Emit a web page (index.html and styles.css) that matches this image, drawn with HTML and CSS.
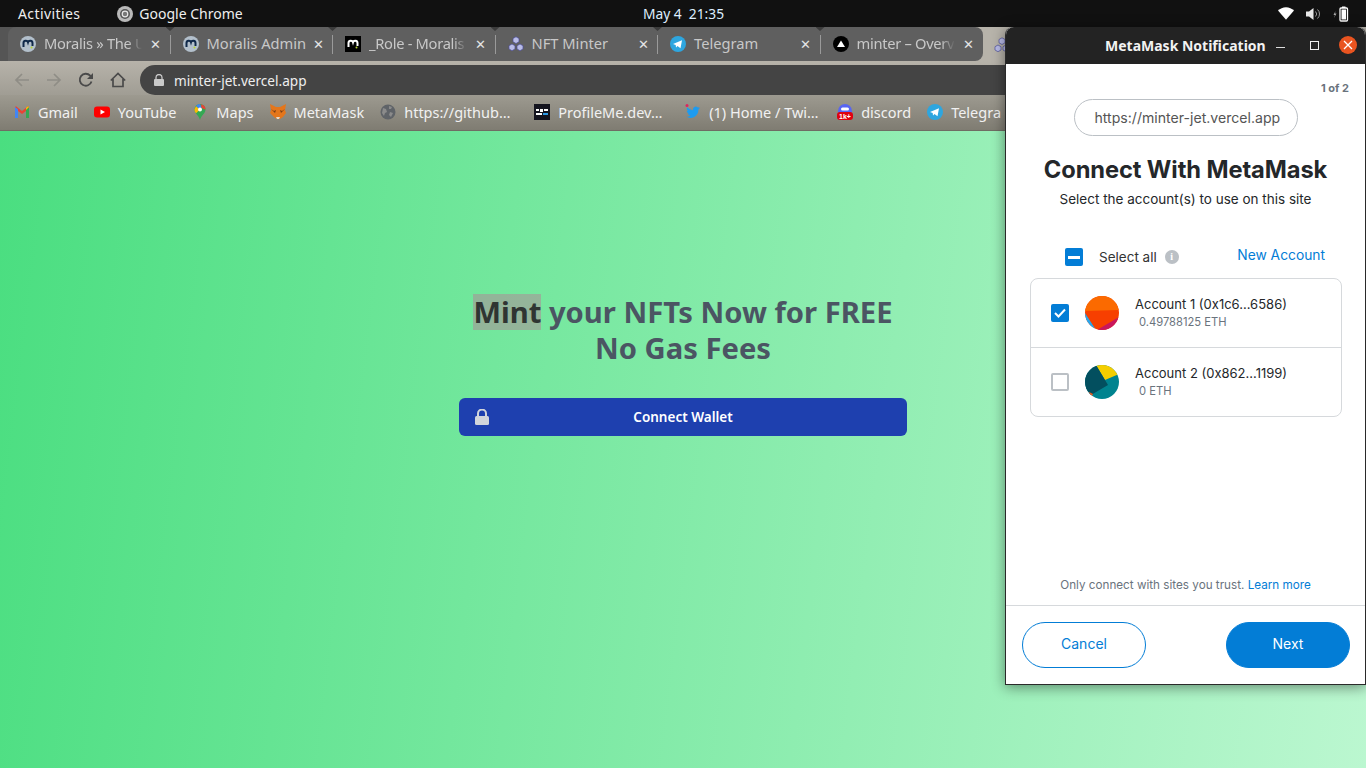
FILE: index.html
```html
<!DOCTYPE html>
<html lang="en">
<head>
<meta charset="utf-8">
<title>NFT Minter</title>
<link rel="stylesheet" href="styles.css">
</head>
<body>
<div class="desktop">
  <header class="topbar">
    <div class="topbar-left">
      <span class="activities">Activities</span>
      <span class="appname">
        <svg class="chrome-ic" viewBox="0 0 16 16"><circle cx="8" cy="8" r="8" fill="#b9b9b9"/><circle cx="8" cy="8" r="5" fill="#555"/><circle cx="8" cy="8" r="3.4" fill="#e8e8e8"/><circle cx="8" cy="8" r="2.2" fill="#777"/></svg>
        Google Chrome
      </span>
    </div>
    <div class="clock">May 4&nbsp; 21:35</div>
    <div class="tray">
      <svg class="tray-wifi" viewBox="0 0 16 13"><path d="M0 3.6C2 1.6 5 .3 8 .3s6 1.3 8 3.3L8 12.7z" fill="#fff"/></svg>
      <svg class="tray-vol" viewBox="0 0 15 14"><path d="M0 4.5h3L7.5 1v12L3 9.500H0z" fill="#e8e8e8"/><path d="M9.500 4.500a3.500 3.500 0 0 1 0 5M11.500 2.500a6 6 0 0 1 0 9" fill="none" stroke="#999" stroke-width="1"/></svg>
      <svg class="tray-bat" viewBox="0 0 16 16"><path d="M2.500 5 .5 9h1.500L1 12l2.500-4.500H2z" fill="#aaa"/><rect x="7" y="2" width="7.500" height="13" rx="1" fill="none" stroke="#fff" stroke-width="1.300"/><rect x="9" y="0.500" width="3.500" height="1.500" fill="#fff"/><rect x="8.500" y="3.500" width="4.500" height="10" fill="#fff"/></svg>
    </div>
  </header>

  <div class="browser">
    <div class="tabstrip">
      <div class="tab">
        <svg class="fav" viewBox="0 0 16 16"><circle cx="8" cy="8" r="8" fill="#b3c0cc"/><path d="M3.500 11V7a2.300 2.300 0 0 1 4.500-.7A2.300 2.300 0 0 1 12.500 7v3" fill="none" stroke="#10294a" stroke-width="2"/><circle cx="11.500" cy="11.500" r="1" fill="#b7d433"/></svg>
        <span class="tab-title tab-fade">Moralis » The U</span><span class="tab-x">✕</span>
      </div>
      <div class="tab">
        <svg class="fav" viewBox="0 0 16 16"><circle cx="8" cy="8" r="8" fill="#b3c0cc"/><path d="M3.500 11V7a2.300 2.300 0 0 1 4.500-.7A2.300 2.300 0 0 1 12.500 7v3" fill="none" stroke="#10294a" stroke-width="2"/><circle cx="11.500" cy="11.500" r="1" fill="#b7d433"/></svg>
        <span class="tab-title">Moralis Admin</span><span class="tab-x">✕</span>
      </div>
      <div class="tab">
        <svg class="fav" viewBox="0 0 16 16"><rect width="16" height="16" fill="#000"/><path d="M3.500 11V7a2.300 2.300 0 0 1 4.500-.7A2.300 2.300 0 0 1 12.500 7v3" fill="none" stroke="#fff" stroke-width="2"/><circle cx="11.500" cy="11.500" r="1" fill="#b7d433"/></svg>
        <span class="tab-title tab-fade">_Role - Moralis</span><span class="tab-x">✕</span>
      </div>
      <div class="tab">
        <svg class="fav" viewBox="0 0 16 16"><g fill="#b9bce8" stroke="#4d4f99" stroke-width=".7"><path d="M8 .8l3 1.700v3.300L8 7.500 5 5.800V2.500z"/><path d="M4 8l3 1.700V13l-3 1.700L1 13V9.700z"/><path d="M12 8l3 1.700V13l-3 1.700L9 13V9.700z"/></g></svg>
        <span class="tab-title">NFT Minter</span><span class="tab-x">✕</span>
      </div>
      <div class="tab">
        <svg class="fav" viewBox="0 0 16 16"><circle cx="8" cy="8" r="8" fill="#2ea6df"/><path d="M3 8l9-3.700-1.500 8-3-2.200-1.500 1.500-.3-2.500z" fill="#fff"/></svg>
        <span class="tab-title">Telegram</span><span class="tab-x">✕</span>
      </div>
      <div class="tab tab-last">
        <svg class="fav" viewBox="0 0 16 16"><circle cx="8" cy="8" r="8" fill="#000"/><path d="M8 4.500l4 6.500H4z" fill="#fff"/></svg>
        <span class="tab-title tab-fade">minter – Overv</span><span class="tab-x">✕</span>
      </div>
      <div class="tab-active">
        <svg class="fav" viewBox="0 0 16 16"><g fill="#b9bce8" stroke="#4d4f99" stroke-width=".7"><path d="M8 .8l3 1.700v3.300L8 7.500 5 5.800V2.500z"/><path d="M4 8l3 1.700V13l-3 1.700L1 13V9.700z"/><path d="M12 8l3 1.700V13l-3 1.700L9 13V9.700z"/></g></svg>
      </div>
    </div>

    <div class="toolbar">
      <svg class="nav-ic" viewBox="0 0 16 16"><path d="M15 8H2M8 2 2 8l6 6" fill="none" stroke="#8f8d86" stroke-width="1.700"/></svg>
      <svg class="nav-ic" viewBox="0 0 16 16"><path d="M1 8h13M8 2l6 6-6 6" fill="none" stroke="#8f8d86" stroke-width="1.700"/></svg>
      <svg class="nav-ic" viewBox="0 0 16 16"><path d="M13.500 9.500A6 6 0 1 1 12.200 3.700L14 5.500" fill="none" stroke="#4a4a4a" stroke-width="1.800"/><path d="M15 1v6H9z" fill="#4a4a4a"/></svg>
      <svg class="nav-ic" viewBox="0 0 16 16"><path d="M.8 8.500 8 1.500l7.200 7M3 7v7.500h10V7" fill="none" stroke="#4a4a4a" stroke-width="1.700"/></svg>
      <div class="omnibox">
        <svg class="lock" viewBox="0 0 10 12"><path d="M2 5V3.500a3 3 0 0 1 6 0V5" fill="none" stroke="#c9c9c9" stroke-width="1.300"/><rect y="5" width="10" height="7" rx="1" fill="#c9c9c9"/></svg>
        <span>minter-jet.vercel.app</span>
      </div>
    </div>

    <nav class="bookmarks">
      <span class="bm"><svg class="fav" viewBox="0 0 16 16"><path d="M1 3v11h3V7l4 3 4-3v7h3V3l-1-.7L8 7 2 2.300z" fill="#ea4335"/><path d="M1 14V3l3 2.300V14z" fill="#4285f4"/><path d="M15 14V3l-3 2.300V14z" fill="#34a853"/><path d="M15 3l-1-.7L12 3.800V6z" fill="#fbbc04"/></svg>Gmail</span>
      <span class="bm"><svg class="fav" viewBox="0 0 16 16"><rect y="2.500" width="16" height="11" rx="3" fill="#f00"/><path d="M6.500 5.500 11 8l-4.500 2.500z" fill="#fff"/></svg>YouTube</span>
      <span class="bm"><svg class="fav" viewBox="0 0 16 16"><path d="M8 0a5.500 5.500 0 0 1 5.500 5.500C13.500 9.500 9 11.500 8 16 7 11.500 2.500 9.500 2.500 5.500A5.500 5.500 0 0 1 8 0z" fill="#34a853"/><path d="M4 2 2.500 5.500c0 1.500.7 2.700 1.500 3.800L8 5.500z" fill="#fbbc04"/><path d="M4 2a5.500 5.500 0 0 1 4-2l1.500 3.500L8 5.500z" fill="#4285f4"/><path d="M9 .2A5.500 5.500 0 0 1 13.500 5.500L9.500 4z" fill="#ea4335"/><circle cx="8" cy="5.500" r="2" fill="#fff"/></svg>Maps</span>
      <span class="bm"><svg class="fav" viewBox="0 0 16 16"><path d="M0 0l6 3h4l6-3-1 6 1 3-3 4-3 2H7l-3-2-4-4 1-3z" fill="#e4761b"/><path d="M1 5l3 2 2-1-1 3zM15 5l-3 2-2-1 1 3z" fill="#763d16"/><path d="M6 13h4l-1 2H7z" fill="#e8d9c8"/></svg>MetaMask</span>
      <span class="bm bm-138"><svg class="fav" viewBox="0 0 16 16"><circle cx="8" cy="8" r="7.500" fill="#5f6368"/><path d="M3 4l3 1 1 3-2 1-1 3-2-3zM9 2l3 1-1 2-2 0zM10 8l3 1-2 4-2-2z" fill="#8b8b8b"/></svg>https://github…</span>
      <span class="bm bm-135"><svg class="fav" viewBox="0 0 16 16"><rect width="16" height="16" fill="#15151f"/><path d="M2 5h3v2H2zM6 5h3v3H6zM10 5h4v2h-4zM2 9h6v2H2z" fill="#fff"/><path d="M9 9h5v2H9z" fill="#2e9be6"/></svg>ProfileMe.dev…</span>
      <span class="bm bm-136"><svg class="fav" viewBox="0 0 16 16"><path d="M15 4c-.5.300-1 .4-1.600.5.600-.4 1-.9 1.200-1.600-.5.300-1.100.6-1.800.7A2.800 2.800 0 0 0 8 6.200 8 8 0 0 1 2.200 3.300c-.7 1.300-.3 2.900.9 3.700-.4 0-.9-.1-1.300-.3 0 1.300 1 2.500 2.300 2.800-.4.100-.9.100-1.300 0 .4 1.100 1.400 1.900 2.700 1.900A5.700 5.700 0 0 1 1 12.600 8 8 0 0 0 13.400 5.600c.6-.4 1.200-1 1.600-1.600z" fill="#1d9bf0"/><circle cx="2" cy="1.500" r="1.500" fill="#e0245e"/></svg>(1) Home / Twi…</span>
      <span class="bm"><svg class="fav" viewBox="0 0 16 16"><circle cx="8" cy="7" r="7" fill="#5865f2"/><rect x="4" y="3.500" width="8" height="3" rx="1.500" fill="#fff"/><rect y="8" width="16" height="8" rx="3" fill="#e0000f"/><text class="badge-txt" x="8" y="15">1k+</text></svg>discord</span>
      <span class="bm"><svg class="fav" viewBox="0 0 16 16"><circle cx="8" cy="8" r="8" fill="#2ea6df"/><path d="M3 8l9-3.700-1.500 8-3-2.200-1.500 1.500-.3-2.500z" fill="#fff"/></svg>Telegra</span>
    </nav>

    <main class="page">
      <h1 class="headline"><span class="selected">Mint</span> your NFTs Now for FREE<br>No Gas Fees</h1>
      <button class="connect" type="button">
        <svg class="connect-lock" viewBox="0 0 14 16"><path d="M3 7V4.500a4 4 0 0 1 8 0V7" fill="none" stroke="#d1d5db" stroke-width="2"/><rect y="7" width="14" height="9" rx="1.500" fill="#d1d5db"/></svg>
        Connect Wallet
      </button>
    </main>
  </div>

  <aside class="popup">
    <div class="popup-title">
      <span class="popup-name">MetaMask Notification</span>
      <span class="win-min"></span>
      <span class="win-max"></span>
      <span class="win-close">
        <svg viewBox="0 0 10 10"><path d="M1 1l8 8M9 1 1 9" stroke="#fff" stroke-width="1.300"/></svg>
      </span>
    </div>
    <div class="mm">
      <div class="mm-count">1 of 2</div>
      <div class="mm-origin-row"><div class="mm-origin">https://minter-jet.vercel.app</div></div>
      <h2 class="mm-h">Connect With MetaMask</h2>
      <p class="mm-sub">Select the account(s) to use on this site</p>
      <div class="mm-select">
        <span class="cb cb-on cb-all"><span class="cb-dash"></span></span>
        <span class="mm-selall">Select all</span>
        <span class="mm-info">i</span>
        <span class="mm-new">New Account</span>
      </div>
      <div class="mm-list">
        <div class="mm-acc">
          <span class="cb cb-on"><svg viewBox="0 0 12 10"><path d="M1 5l3.500 3.500L11 1.500" fill="none" stroke="#fff" stroke-width="2"/></svg></span>
          <svg class="mm-av" viewBox="0 0 34 34"><rect width="34" height="34" fill="#f73f00"/><path d="M0 17 11 34H0z" fill="#26a8ef"/><path d="M0 15 34 14V0H0z" fill="#fb6a00"/><path d="M12 34 34 21V34z" fill="#c9175c"/></svg>
          <div class="mm-acc-txt">
            <div class="mm-acc-name">Account 1 (0x1c6...6586)</div>
            <div class="mm-acc-bal">0.49788125 ETH</div>
          </div>
        </div>
        <div class="mm-acc mm-acc-2">
          <span class="cb cb-off"></span>
          <svg class="mm-av" viewBox="0 0 34 34"><rect width="34" height="34" fill="#00838f"/><path d="M11 0H34V9L20 15z" fill="#f5ce00"/><path d="M11 0 20 15 23 20 6 30 0 34V0z" fill="#034f5f"/><path d="M4 27 8 29 6 33z" fill="#f05a1c"/></svg>
          <div class="mm-acc-txt">
            <div class="mm-acc-name">Account 2 (0x862...1199)</div>
            <div class="mm-acc-bal">0 ETH</div>
          </div>
        </div>
      </div>
      <div class="mm-trust">Only connect with sites you trust. <span class="mm-link">Learn more</span></div>
      <div class="mm-foot">
        <button class="mm-btn mm-cancel" type="button">Cancel</button>
        <button class="mm-btn mm-next" type="button">Next</button>
      </div>
    </div>
  </aside>
</div>
</body>
</html>
```

FILE: styles.css
```css
* { box-sizing: border-box; }
html, body { margin: 0; padding: 0; height: 100%; overflow: hidden; }
body { font-family: "Open Sans", "Noto Sans", sans-serif; }

.desktop { position: relative; width: 1366px; height: 768px; display: flex; flex-direction: column; background: #111; overflow: hidden; }

/* GNOME top bar */
.topbar { height: 27px; flex: none; background: #111; color: #eee; font-size: 14px; display: grid; grid-template-columns: 1fr auto 1fr; align-items: center; padding: 0 17px 0 18px; font-family: "Noto Sans", sans-serif; }
.topbar-left { display: flex; align-items: center; gap: 37px; }
.activities { letter-spacing: .4px; }
.appname { display: flex; align-items: center; gap: 6px; }
.chrome-ic { width: 16px; height: 16px; }
.clock { font-size: 13.800px; color: #ddeeff; }
.tray { display: flex; justify-content: flex-end; align-items: center; gap: 12px; }
.tray-wifi { width: 16px; height: 13px; }
.tray-vol { width: 15px; height: 14px; }
.tray-bat { width: 16px; height: 16px; }

/* Browser */
.browser { flex: 1; display: flex; flex-direction: column; min-height: 0; background: #a9a69d; }
.tabstrip { height: 34px; flex: none; display: flex; padding: 0 0 0 8px; background: linear-gradient(to right, #555 0 16px, #b7b3aa 16px); font-family: "Noto Sans", sans-serif; }
.tab { width: 162.500px; height: 34px; flex: none; background: #5f5f5f; display: flex; align-items: center; padding: 0 9px 0 12px; position: relative; color: #c8c8c8; font-size: 14.700px; gap: 8px; }
.tab:first-child { border-top-left-radius: 8px; }
.tab::after { content: ""; position: absolute; right: 0; top: 8px; height: 19px; width: 1px; background: #9a9a9a; }
.tab::before { content: ""; position: absolute; right: -4px; top: 0; width: 9px; height: 4px; background: #3c3c3c; clip-path: polygon(0 0, 100% 0, 50% 100%); z-index: 1; }
.tab-last { border-radius: 0 8px 8px 0; }
.tab-last::after, .tab-last::before { display: none; }
.tab-title { flex: 1; min-width: 0; white-space: nowrap; margin-bottom: 2px; }
.tab-fade { letter-spacing: -.3px; -webkit-mask-image: linear-gradient(to right, #000 84px, transparent 98px); mask-image: linear-gradient(to right, #000 84px, transparent 98px); }
.tab-x { font-size: 13px; color: #e4e4e4; width: 12px; text-align: center; flex: none; }
.tab-active { flex: 1; background: #b7b3aa; border-radius: 8px 0 0 0; padding: 9px 0 0 11px; }
.fav { width: 16px; height: 16px; flex: none; }

.toolbar { height: 34px; flex: none; display: flex; align-items: center; padding: 4px 0 0 14px; gap: 16px; background: linear-gradient(#b7b3aa, #a09d94); }
.nav-ic { width: 16px; height: 16px; flex: none; }
.omnibox { margin-left: -2px; flex: 1; height: 30px; background: #444; border-radius: 15px 0 0 15px; display: flex; align-items: center; padding-left: 14px; gap: 10px; color: #eee; font-size: 13.600px; font-family: "Noto Sans", sans-serif; }
.lock { width: 10px; height: 12px; }

.bookmarks { height: 36px; flex: none; display: flex; align-items: center; padding: 0 0 1px 14px; gap: 16px; background: linear-gradient(#9d9a90, #7f7c72); color: #f1f1f1; font-size: 14.500px; font-family: "Noto Sans", sans-serif; white-space: nowrap; overflow: hidden; border-bottom: 1px solid #6f6d64; }
.bm { display: flex; align-items: center; gap: 8px; }
.bm-138 { width: 138px; }
.bm-135 { width: 135px; }
.bm-136 { width: 136px; }
.badge-txt { font-size: 7px; font-weight: 700; fill: #fff; text-anchor: middle; font-family: "Liberation Sans", sans-serif; }

/* Page */
.page { flex: 1; min-height: 0; background: linear-gradient(97deg, #4ade80 0%, #bbf7d0 100%); display: flex; flex-direction: column; align-items: center; padding-top: 163px; font-family: "Noto Sans", sans-serif; }
.headline { margin: 0; font-size: 29.200px; line-height: 36px; font-weight: 700; text-align: center; color: #4b5563; }
.selected { display: inline-block; background: rgba(180, 130, 150, .5); color: #2f3532; }
.connect { margin-top: 32px; width: 448px; height: 38px; border: 0; border-radius: 6px; background: #1e40af; color: #fff; font: 600 13.500px "Noto Sans", sans-serif; position: relative; padding: 0; }
.connect-lock { position: absolute; left: 16px; top: 11px; width: 14px; height: 16px; }

/* MetaMask window */
.popup { position: absolute; left: 1005px; top: 27px; width: 361px; height: 658px; display: flex; flex-direction: column; border: 1px solid #2a2a2a; border-top: 0; border-radius: 8px 8px 0 0; box-shadow: 0 2px 14px rgba(0,0,0,.45); background: #fff; }
.popup-title { height: 37px; flex: none; background: #232323; border-radius: 8px 8px 0 0; display: flex; align-items: center; color: #f2f2f2; position: relative; }
.popup-name { margin-left: 99px; font: 700 14px "Noto Sans", sans-serif; white-space: nowrap; }
.win-min { position: absolute; left: 270px; top: 20px; width: 9px; height: 1px; background: #ddd; }
.win-max { position: absolute; left: 304px; top: 14px; width: 9px; height: 9px; border: 1px solid #eee; }
.win-close { position: absolute; left: 333px; top: 9px; width: 18px; height: 18px; background: #e95420; border-radius: 50%; display: flex; align-items: center; justify-content: center; }
.win-close svg { width: 10px; height: 10px; }

.mm { flex: 1; min-height: 0; display: flex; flex-direction: column; font-family: "Inter", sans-serif; color: #24272a; }
.mm-count { text-align: right; padding: 17px 16px 0 0; font-size: 11px; line-height: 14px; font-weight: 700; color: #6a737d; }
.mm-origin-row { display: flex; justify-content: center; margin-top: 4px; }
.mm-origin { width: 224px; height: 37px; border: 1px solid #bbc0c5; border-radius: 19px; display: flex; align-items: center; padding-left: 20px; color: #555; font-size: 14.100px; white-space: nowrap; }
.mm-h { margin: 18px 0 0; text-align: center; font: 700 23.700px/32px "Inter", sans-serif; letter-spacing: -.1px; color: #24272a; }
.mm-sub { margin: 3px 0 0; text-align: center; font: 400 13.500px/20px "Inter", sans-serif; color: #24272a; }
.mm-select { position: relative; height: 38px; margin-top: 29px; display: flex; align-items: center; padding-left: 59px; font: 400 13.500px "Inter", sans-serif; color: #333; }
.cb { width: 18px; height: 18px; border-radius: 2px; display: flex; align-items: center; justify-content: center; flex: none; }
.cb svg { width: 12px; height: 10px; }
.cb-on { background: #037dd6; }
.cb-off { border: 2px solid #bbc0c5; background: #fff; }
.cb-dash { width: 12px; height: 3px; background: #fff; }
.mm-selall { margin-left: 16px; }
.mm-info { margin-left: 8px; width: 14px; height: 14px; border-radius: 50%; background: #bbc0c5; color: #fff; font: 700 10px/14px "Liberation Serif", serif; text-align: center; }
.mm-new { position: absolute; right: 40px; top: 9px; color: #037dd6; font-size: 13.800px; }
.mm-list { margin: 2px 23px 0 24px; height: 139px; border: 1px solid #d6d9dc; border-radius: 8px; display: flex; flex-direction: column; }
.mm-acc { height: 68px; flex: none; display: flex; align-items: center; padding: 0 0 0 20px; gap: 16px; }
.mm-acc-2 { height: 69px; border-top: 1px solid #d6d9dc; }
.mm-av { width: 34px; height: 34px; flex: none; border-radius: 50%; }
.mm-acc-txt { font-family: "Inter", sans-serif; margin-top: -2px; }
.mm-acc-name { font-size: 13px; line-height: 18px; color: #24272a; }
.mm-acc-bal { font-size: 11.200px; line-height: 16px; color: #6a737d; padding-left: 4px; margin-top: 1px; }
.mm-trust { margin-top: auto; padding-bottom: 12px; text-align: center; font: 400 11.700px/16px "Inter", sans-serif; color: #6a737d; }
.mm-link { color: #037dd6; }
.mm-foot { height: 79px; flex: none; border-top: 1px solid #d6d9dc; display: flex; justify-content: space-between; align-items: flex-start; padding: 16px 15px 0 16px; }
.mm-btn { width: 124px; height: 46px; border-radius: 23px; font: 400 14px "Inter", sans-serif; padding: 0 0 3px; }
.mm-cancel { background: #fff; border: 1px solid #037dd6; color: #037dd6; }
.mm-next { background: #037dd6; border: 1px solid #037dd6; color: #fff; }
```
